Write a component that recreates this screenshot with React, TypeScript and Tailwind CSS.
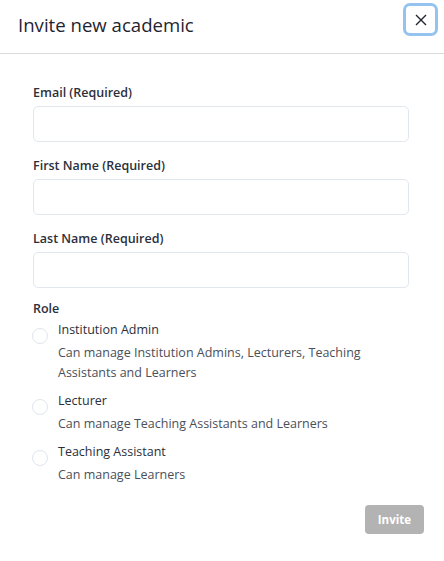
import { useState } from 'react';

const roles = [
    {
        id: 'institution_admin',
        name: 'Institution Admin',
        description: 'Can manage Institution Admins, Lecturers, Teaching Assistants and Learners',
    },
    {
        id: 'lecturer',
        name: 'Lecturer',
        description: 'Can manage Teaching Assistants and Learners',
    },
    {
        id: 'teaching_assistant',
        name: 'Teaching Assistant',
        description: 'Can manage Learners',
    },
];

function Field({ label, value, onChange }: { label: string; value: string; onChange: (v: string) => void }) {
    return (
        <div className="mb-[14px]">
            <label className="block text-[12.5px] leading-5 font-semibold text-[#2b303b]">{label}</label>
            <input
                type="text"
                value={value}
                onChange={(e) => onChange(e.target.value)}
                className="mt-[3px] block h-9 w-full rounded-[5px] border border-[#e2e6ee] bg-white px-3 text-[13px] text-[#1f2430] outline-none"
            />
        </div>
    );
}

export default function App() {
    const [email, setEmail] = useState('');
    const [firstName, setFirstName] = useState('');
    const [lastName, setLastName] = useState('');
    const [role, setRole] = useState('');

    return (
        <div className="min-h-screen w-full bg-white font-['Open_Sans',sans-serif]">
            <div className="box-border flex h-[54px] items-start justify-between border-b border-[#dadada] pl-[18px] pr-[6px]">
                <h2 className="mt-[11px] text-[18.6px] leading-7 font-normal text-[#1f2430]">Invite new academic</h2>
                <button className="mt-[3px] flex h-[33px] w-[35px] items-center justify-center rounded-[7px] border-[3px] border-[#93c3ee] bg-white text-[#1f2430]">
                    <svg width="12" height="12" viewBox="0 0 12 12" fill="none" stroke="currentColor" strokeWidth={1.4}>
                        <path d="M1 1l10 10M11 1L1 11" />
                    </svg>
                </button>
            </div>

            <div className="pl-[33px] pr-[35px] pt-[29px]">
                <Field label="Email (Required)" value={email} onChange={setEmail} />
                <Field label="First Name (Required)" value={firstName} onChange={setFirstName} />
                <Field label="Last Name (Required)" value={lastName} onChange={setLastName} />

                <div className="-mt-[2px]">
                    <div className="text-[12.5px] leading-[18px] font-semibold text-[#2b303b]">Role</div>
                    <div className="mt-[2px] flex flex-col gap-[8px]">
                        {roles.map((r) => (
                            <label key={r.id} className="flex cursor-pointer items-start">
                                <input
                                    type="radio"
                                    name="role"
                                    checked={role === r.id}
                                    onChange={() => setRole(r.id)}
                                    className="sr-only"
                                />
                                <span className="mt-2 ml-[-1px] h-4 w-4 shrink-0 rounded-full border border-[#e0e5ee] bg-white" />
                                <span className="ml-[10px] block">
                                    <span className="block text-[12.5px] leading-5 text-[#2a2f3a]">{r.name}</span>
                                    <span className="mt-[3px] block text-[12.5px] leading-5 text-[#4a4f5a]">{r.description}</span>
                                </span>
                            </label>
                        ))}
                    </div>
                </div>

                <div className="mt-[20px] flex justify-end">
                    <button
                        disabled
                        className="mr-[-15px] h-[29px] rounded-[4px] bg-[#b3b3b3] px-[13px] text-[11.5px] font-bold text-white"
                    >
                        Invite
                    </button>
                </div>
            </div>
        </div>
    );
}
